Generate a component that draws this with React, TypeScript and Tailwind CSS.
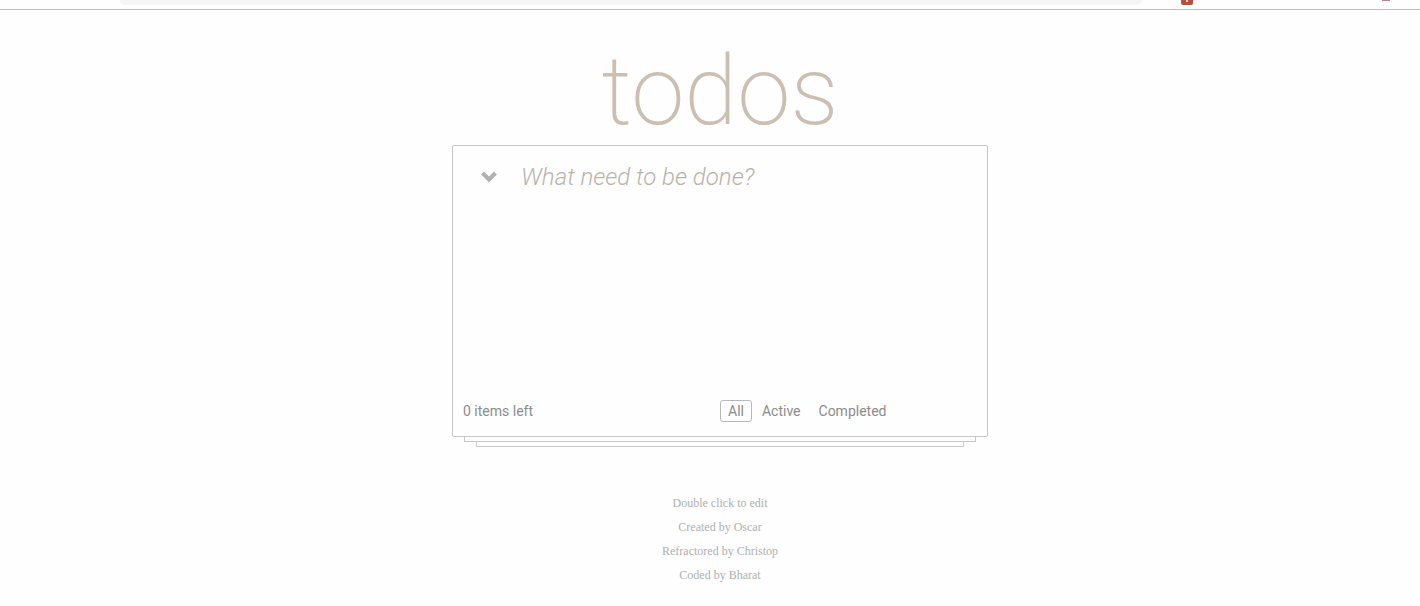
import { useState } from "react";

const filters = ["All", "Active", "Completed"];
const credits = [
  "Double click to edit",
  "Created by Oscar",
  "Refractored by Christop",
  "Coded by Bharat",
];

function TopStrip() {
  return (
    <div className="flex h-[10px] items-start border-b border-[#bdbdbd]">
      <div className="ml-[120px] h-[5px] w-[72%] rounded-b-full bg-[#f5f5f5]" />
      <div className="ml-[39px] flex h-[5px] w-3 justify-center rounded-b-xs bg-[#b5503f]">
        <span className="h-[2px] w-[2px] bg-[#f0cfc8]" />
      </div>
      <div className="mr-[30px] ml-auto h-px w-2 bg-[#a98a96]" />
    </div>
  );
}

export default function App() {
  const [active, setActive] = useState("All");

  return (
    <div className="min-h-screen bg-[#fefefe] font-['Roboto',sans-serif]">
      <TopStrip />
      <main className="flex flex-col items-center pl-5">
        <h1 className="pt-[27px] text-8xl leading-[108px] font-extralight text-[#cbbfb1]">todos</h1>
        <section className="flex h-[292px] w-full max-w-[536px] flex-col justify-between rounded-xs border border-[#c8c8c8]">
          <div className="flex h-[61px] items-center">
            <button type="button" aria-label="Toggle all" className="ml-7 text-[#b0b0b0]">
              <svg width="16" height="12" viewBox="0 0 16 12" fill="none" stroke="currentColor" strokeWidth="4">
                <path d="M1.5 2 8 8.5 14.5 2" />
              </svg>
            </button>
            <input
              type="text"
              aria-label="New todo"
              placeholder="What need to be done?"
              className="ml-6 min-w-0 flex-1 bg-transparent text-2xl font-light italic outline-none placeholder:text-[#b8b3ab]"
            />
          </div>
          <div className="flex h-[50px] items-center pl-[10px] text-sm text-[#8c8c8c]">
            <span className="w-[257px]">0 items left</span>
            <div className="flex gap-[2px]">
              {filters.map((name) => (
                <button
                  key={name}
                  type="button"
                  aria-pressed={active === name}
                  onClick={() => setActive(name)}
                  className={`h-[22px] rounded-[3px] border px-[7px] leading-5 ${
                    active === name ? "border-[#b8b8b8]" : "border-transparent"
                  }`}
                >
                  {name}
                </button>
              ))}
            </div>
          </div>
        </section>
        <div className="h-[5px] w-full max-w-[512px] border-x border-b border-[#c8c8c8]" />
        <div className="h-[5px] w-full max-w-[488px] border-x border-b border-[#c8c8c8]" />
        <footer className="mt-11 text-center font-['Liberation_Serif',serif] text-xs leading-6 text-[#b0b0b0]">
          {credits.map((line) => (
            <p key={line}>{line}</p>
          ))}
        </footer>
      </main>
    </div>
  );
}
